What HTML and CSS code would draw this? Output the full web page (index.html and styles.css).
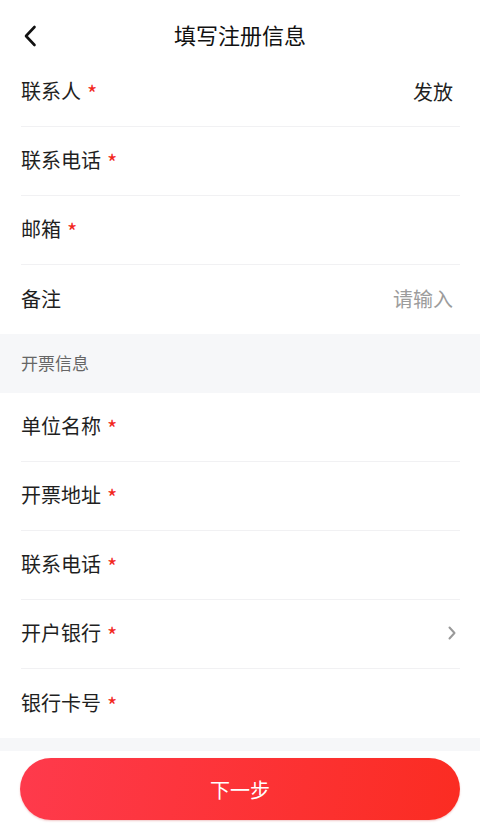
FILE: index.html
```html
<!DOCTYPE html>
<html lang="zh">
<head>
<meta charset="utf-8">
<link rel="stylesheet" href="styles.css">
</head>
<body>
<div class="page">
  <header class="nav">
    <span class="back"><svg width="14" height="22" viewBox="0 0 14 22"><path d="M11.5 2 L3 11 L11.5 20" fill="none" stroke="#111" stroke-width="2.6" stroke-linecap="round" stroke-linejoin="round"/></svg></span>
    <h1 class="title">填写注册信息</h1>
  </header>
  <section class="group">
    <div class="row"><span class="label">联系人<i class="req">*</i></span><span class="value">发放</span></div>
    <div class="row"><span class="label">联系电话<i class="req">*</i></span></div>
    <div class="row"><span class="label">邮箱<i class="req">*</i></span></div>
    <div class="row last"><span class="label">备注</span><span class="value placeholder">请输入</span></div>
  </section>
  <div class="section-title">开票信息</div>
  <section class="group">
    <div class="row"><span class="label">单位名称<i class="req">*</i></span></div>
    <div class="row"><span class="label">开票地址<i class="req">*</i></span></div>
    <div class="row"><span class="label">联系电话<i class="req">*</i></span></div>
    <div class="row"><span class="label">开户银行<i class="req">*</i></span><span class="arrow"><svg width="10" height="16" viewBox="0 0 10 16"><path d="M2.5 2.5 L7.5 8 L2.5 13.5" fill="none" stroke="#999" stroke-width="2" stroke-linecap="round" stroke-linejoin="round"/></svg></span></div>
    <div class="row last"><span class="label">银行卡号<i class="req">*</i></span></div>
  </section>
  <div class="spacer"></div>
  <footer class="footer">
    <button class="next">下一步</button>
  </footer>
</div>
</body>
</html>
```
FILE: styles.css
```css
* { box-sizing: border-box; margin: 0; padding: 0; }
html, body { background: #fff; }
body {
  font-family: "Noto Sans CJK SC", "Noto Sans", sans-serif;
  color: #1f1f1f;
  width: 480px;
  height: 828px;
  overflow: hidden;
}
.page { display: flex; flex-direction: column; height: 828px; }
.nav {
  height: 58px;
  padding-top: 9px;
  display: flex;
  align-items: center;
  justify-content: center;
  position: relative;
}
.back {
  position: absolute;
  left: 23px;
  top: 25px;
  display: flex;
}
.title {
  font-size: 22px;
  font-weight: 400;
  line-height: 46px;
  height: 46px;
  color: #111;
}
.group { padding: 0 20px 0 21px; background: #fff; }
.row {
  height: 69px;
  padding-bottom: 2px;
  display: flex;
  align-items: center;
  justify-content: space-between;
  border-bottom: 1px solid #f1f1f3;
}
.row.last { border-bottom: none; }
.label { font-size: 20px; line-height: 28px; color: #1f1f1f; display: flex; align-items: center; }
.req {
  font-style: normal;
  color: #f2271c;
  font-size: 22px;
  line-height: 28px;
  margin-left: 6px;
  position: relative;
  top: 1px;
}
.value { font-size: 20px; color: #1f1f1f; margin-right: 7px; }
.placeholder { color: #9c9c9c; }
.arrow { display: flex; margin-right: 3px; }
.section-title {
  background: #f6f7f9;
  height: 59px;
  padding-left: 21px;
  padding-bottom: 2px;
  display: flex;
  align-items: center;
  font-size: 17px;
  color: #666;
}
.spacer { height: 13px; background: #f6f7f9; }
.footer { padding: 7px 20px 0; background: #fff; flex: 1; }
.next {
  width: 100%;
  height: 62px;
  border: none;
  border-radius: 31px;
  background: linear-gradient(100deg, #fe3a4c 0%, #fb2c22 100%);
  color: #fff;
  font-family: "Noto Sans CJK SC", "Noto Sans", sans-serif;
  font-size: 20px;
  box-shadow: 0 1px 2px rgba(200, 40, 40, 0.25);
}
```
